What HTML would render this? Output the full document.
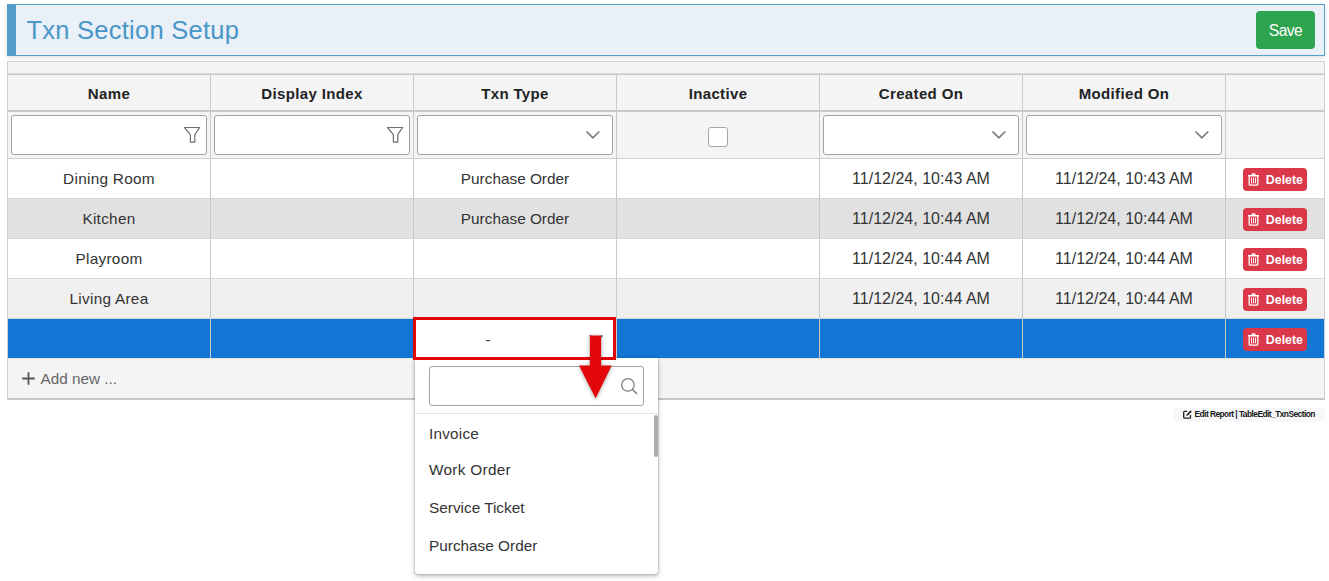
<!DOCTYPE html>
<html><head><meta charset="utf-8"><title>Txn Section Setup</title>
<style>
*{box-sizing:border-box;margin:0;padding:0}
html,body{width:1329px;height:581px;overflow:hidden;background:#fff}
body{font-family:"Liberation Sans",sans-serif;font-size:16px;color:#333;position:relative}
.abs{position:absolute}
#hdr{left:7px;top:4px;width:1318px;height:52px;background:#e9f0f8;border:1px solid #5a9fc9;border-left:9px solid #559bc8;box-shadow:0 2px 4px rgba(0,0,0,.12)}
#title{left:26.5px;top:15px;font-size:25.5px;line-height:30px;color:#4a96c7;white-space:nowrap;letter-spacing:.25px}
#save{left:1256px;top:11px;width:59px;height:38px;background:#2fa44f;border-radius:4px;color:#fff;text-align:center;line-height:40px;font-size:15.6px;letter-spacing:-.55px}
#grid{left:7px;top:61px;width:1318px;height:339px;background:#f4f4f4;border:1px solid #cfcfcf;border-bottom:2px solid #c6c6c6}
.hl{position:absolute;left:8px;width:1316px;height:1px;background:#d6d6d6}
.vl{position:absolute;background:#c9c9c9;width:1px}
.row{position:absolute;left:8px;width:1316px;height:40px}
.th{position:absolute;top:76px;height:35px;line-height:35px;text-align:center;font-weight:700;color:#222;font-size:15px;letter-spacing:.35px;white-space:nowrap}
.inp{position:absolute;top:115px;height:40px;width:196px;background:#fff;border:1px solid #a3a3a3;border-radius:3px}
.fi{position:absolute;left:171px;top:10px}
.ci{position:absolute;left:166px;top:12px}
.td{position:absolute;height:40px;line-height:40px;text-align:center;white-space:nowrap;color:#333;font-size:15.35px}
.dt{font-size:16px;letter-spacing:.02px}
.nm{letter-spacing:.28px}
.del{position:absolute;left:1243px;width:64px;height:23px;background:#da3848;border-radius:4px;color:#fff;font-weight:700;font-size:12.4px;line-height:25px;padding-left:22.8px;white-space:nowrap;overflow:hidden}
.del svg{position:absolute;left:4px;top:4px}
#cb{left:708px;top:127px;width:20px;height:20px;background:#fff;border:1px solid #a6a6a6;border-radius:3px}
#add{left:40.5px;top:359px;height:40px;line-height:40px;color:#666;font-size:15.3px;white-space:nowrap}
#badge{left:1173px;top:408px;width:152px;height:14px;background:#f7f8fa;border-radius:4px}
#badge span{position:absolute;left:21.5px;top:0;line-height:13px;font-size:8.4px;font-weight:700;color:#181818;letter-spacing:-.55px;white-space:nowrap}
#badge svg{position:absolute;left:9.5px;top:1.5px}
#red{left:413px;top:317px;width:203.4px;height:43px;border:3px solid #e30306;background:#fff}
#dash{left:483px;top:319px;width:10px;text-align:center;line-height:40px;font-size:16.5px;color:#555}
#pop{left:415px;top:358px;width:243px;height:216px;background:#fff;border-radius:0 0 3px 3px;box-shadow:0 0 1.5px rgba(0,0,0,.45),0 2px 5px rgba(0,0,0,.28)}
#srch{left:429px;top:366px;width:215px;height:40px;background:#fff;border:1px solid #a3a3a3;border-radius:3px}
#sep{left:415px;top:413px;width:243px;height:1px;background:#e4e4e4}
#thumb{left:654px;top:414.5px;width:4px;height:42.5px;background:#adadad;border-radius:2px}
.it{position:absolute;left:429px;font-size:15.35px;line-height:20px;color:#333;white-space:nowrap}
</style></head><body>
<div id="hdr" class="abs"></div>
<div id="title" class="abs">Txn Section Setup</div>
<div id="save" class="abs">Save</div>
<div id="grid" class="abs"></div>

<div class="hl" style="top:73px;background:#dcdcdc"></div>
<div class="hl" style="top:74px;background:#c4c4c4"></div>
<div class="hl" style="top:110px;height:2px;background:#c8c8c8"></div>
<div class="hl" style="top:158px;background:#cfcfcf"></div>
<div class="row" style="top:159px;background:#ffffff"></div>
<div class="row" style="top:199px;background:#e1e1e1"></div>
<div class="hl" style="top:198px"></div>
<div class="row" style="top:239px;background:#ffffff"></div>
<div class="hl" style="top:238px"></div>
<div class="row" style="top:279px;background:#f0f0f0"></div>
<div class="hl" style="top:278px"></div>
<div class="row" style="top:319px;background:#1277d4"></div>
<div class="hl" style="top:318px"></div>
<div class="hl" style="top:358px;background:#e6e6e6"></div>
<div class="vl" style="left:210px;top:75px;height:283px"></div>
<div class="vl" style="left:413px;top:75px;height:283px"></div>
<div class="vl" style="left:616px;top:75px;height:283px"></div>
<div class="vl" style="left:819px;top:75px;height:283px"></div>
<div class="vl" style="left:1022px;top:75px;height:283px"></div>
<div class="vl" style="left:1225px;top:75px;height:283px"></div>
<div class="th" style="left:8px;width:202px">Name</div>
<div class="th" style="left:211px;width:202px">Display Index</div>
<div class="th" style="left:414px;width:202px">Txn Type</div>
<div class="th" style="left:617px;width:202px">Inactive</div>
<div class="th" style="left:820px;width:202px">Created On</div>
<div class="th" style="left:1023px;width:202px">Modified On</div>
<div class="inp" style="left:11px"><svg class="fi" width="18" height="18" viewBox="0 0 18 18"><path d="M1.5 1.5H16.7L11.8 8.6V16.2H7.4V8.6Z" fill="none" stroke="#6e6e6e" stroke-width="1.2" stroke-linejoin="round"/></svg></div>
<div class="inp" style="left:214px"><svg class="fi" width="18" height="18" viewBox="0 0 18 18"><path d="M1.5 1.5H16.7L11.8 8.6V16.2H7.4V8.6Z" fill="none" stroke="#6e6e6e" stroke-width="1.2" stroke-linejoin="round"/></svg></div>
<div class="inp" style="left:417px"><svg class="ci" width="18" height="12" viewBox="0 0 18 12"><path d="M2.5 3.5L8.9 9.9L15.3 3.5" fill="none" stroke="#7a7a7a" stroke-width="1.7" stroke-linecap="butt" stroke-linejoin="miter"/></svg></div>
<div class="inp" style="left:823px"><svg class="ci" width="18" height="12" viewBox="0 0 18 12"><path d="M2.5 3.5L8.9 9.9L15.3 3.5" fill="none" stroke="#7a7a7a" stroke-width="1.7" stroke-linecap="butt" stroke-linejoin="miter"/></svg></div>
<div class="inp" style="left:1026px"><svg class="ci" width="18" height="12" viewBox="0 0 18 12"><path d="M2.5 3.5L8.9 9.9L15.3 3.5" fill="none" stroke="#7a7a7a" stroke-width="1.7" stroke-linecap="butt" stroke-linejoin="miter"/></svg></div>
<div id="cb" class="abs"></div>
<div class="td nm" style="left:8px;top:159px;width:202px">Dining Room</div>
<div class="td" style="left:414px;top:159px;width:202px">Purchase Order</div>
<div class="td dt" style="left:820px;top:159px;width:202px">11/12/24, 10:43 AM</div>
<div class="td dt" style="left:1023px;top:159px;width:202px">11/12/24, 10:43 AM</div>
<div class="del" style="top:168px"><svg width="13" height="15" viewBox="0 0 13 15"><path d="M1 3h11v1.5H1z" fill="#fff"/><path d="M4.2 3.3l.9-1.6a.7.7 0 0 1 .6-.4h1.6a.7.7 0 0 1 .6.4l.9 1.6z" fill="#fff" fill-opacity=".8" stroke="#fff" stroke-width=".5"/><path d="M2.2 4.3v7.7a1.2 1.2 0 0 0 1.2 1.2h6.2a1.2 1.2 0 0 0 1.2-1.2V4.3" fill="none" stroke="#fff" stroke-width="1.3"/><path d="M4.5 5.6v5.8M6.5 5.6v5.8M8.5 5.6v5.8" stroke="#fff" stroke-width="1"/></svg>Delete</div>
<div class="td nm" style="left:8px;top:199px;width:202px">Kitchen</div>
<div class="td" style="left:414px;top:199px;width:202px">Purchase Order</div>
<div class="td dt" style="left:820px;top:199px;width:202px">11/12/24, 10:44 AM</div>
<div class="td dt" style="left:1023px;top:199px;width:202px">11/12/24, 10:44 AM</div>
<div class="del" style="top:208px"><svg width="13" height="15" viewBox="0 0 13 15"><path d="M1 3h11v1.5H1z" fill="#fff"/><path d="M4.2 3.3l.9-1.6a.7.7 0 0 1 .6-.4h1.6a.7.7 0 0 1 .6.4l.9 1.6z" fill="#fff" fill-opacity=".8" stroke="#fff" stroke-width=".5"/><path d="M2.2 4.3v7.7a1.2 1.2 0 0 0 1.2 1.2h6.2a1.2 1.2 0 0 0 1.2-1.2V4.3" fill="none" stroke="#fff" stroke-width="1.3"/><path d="M4.5 5.6v5.8M6.5 5.6v5.8M8.5 5.6v5.8" stroke="#fff" stroke-width="1"/></svg>Delete</div>
<div class="td nm" style="left:8px;top:239px;width:202px">Playroom</div>
<div class="td dt" style="left:820px;top:239px;width:202px">11/12/24, 10:44 AM</div>
<div class="td dt" style="left:1023px;top:239px;width:202px">11/12/24, 10:44 AM</div>
<div class="del" style="top:248px"><svg width="13" height="15" viewBox="0 0 13 15"><path d="M1 3h11v1.5H1z" fill="#fff"/><path d="M4.2 3.3l.9-1.6a.7.7 0 0 1 .6-.4h1.6a.7.7 0 0 1 .6.4l.9 1.6z" fill="#fff" fill-opacity=".8" stroke="#fff" stroke-width=".5"/><path d="M2.2 4.3v7.7a1.2 1.2 0 0 0 1.2 1.2h6.2a1.2 1.2 0 0 0 1.2-1.2V4.3" fill="none" stroke="#fff" stroke-width="1.3"/><path d="M4.5 5.6v5.8M6.5 5.6v5.8M8.5 5.6v5.8" stroke="#fff" stroke-width="1"/></svg>Delete</div>
<div class="td nm" style="left:8px;top:279px;width:202px">Living Area</div>
<div class="td dt" style="left:820px;top:279px;width:202px">11/12/24, 10:44 AM</div>
<div class="td dt" style="left:1023px;top:279px;width:202px">11/12/24, 10:44 AM</div>
<div class="del" style="top:288px"><svg width="13" height="15" viewBox="0 0 13 15"><path d="M1 3h11v1.5H1z" fill="#fff"/><path d="M4.2 3.3l.9-1.6a.7.7 0 0 1 .6-.4h1.6a.7.7 0 0 1 .6.4l.9 1.6z" fill="#fff" fill-opacity=".8" stroke="#fff" stroke-width=".5"/><path d="M2.2 4.3v7.7a1.2 1.2 0 0 0 1.2 1.2h6.2a1.2 1.2 0 0 0 1.2-1.2V4.3" fill="none" stroke="#fff" stroke-width="1.3"/><path d="M4.5 5.6v5.8M6.5 5.6v5.8M8.5 5.6v5.8" stroke="#fff" stroke-width="1"/></svg>Delete</div>
<div class="del" style="top:328px"><svg width="13" height="15" viewBox="0 0 13 15"><path d="M1 3h11v1.5H1z" fill="#fff"/><path d="M4.2 3.3l.9-1.6a.7.7 0 0 1 .6-.4h1.6a.7.7 0 0 1 .6.4l.9 1.6z" fill="#fff" fill-opacity=".8" stroke="#fff" stroke-width=".5"/><path d="M2.2 4.3v7.7a1.2 1.2 0 0 0 1.2 1.2h6.2a1.2 1.2 0 0 0 1.2-1.2V4.3" fill="none" stroke="#fff" stroke-width="1.3"/><path d="M4.5 5.6v5.8M6.5 5.6v5.8M8.5 5.6v5.8" stroke="#fff" stroke-width="1"/></svg>Delete</div>
<svg class="abs" style="left:22px;top:372px" width="13" height="13" viewBox="0 0 13 13"><path d="M6.5 0.3v12.4M0.3 6.5h12.4" stroke="#555" stroke-width="1.8" fill="none"/></svg>
<div id="add" class="abs">Add new ...</div>
<div id="badge" class="abs"><svg width="9" height="9" viewBox="0 0 9 9"><path d="M4.2 1.4H1.6a.9.9 0 0 0-.9.9v5a.9.9 0 0 0 .9.9h5a.9.9 0 0 0 .9-.9V4.9" fill="none" stroke="#222" stroke-width="1.3"/><path d="M3.4 5.8l.3-1.5L7.2.8a.6.6 0 0 1 .9 0l.3.3a.6.6 0 0 1 0 .9L4.9 5.5z" fill="#222"/></svg><span>Edit Report | TableEdit_TxnSection</span></div>
<div id="pop" class="abs"></div>
<div id="srch" class="abs"><svg style="position:absolute;left:190px;top:11px" width="18" height="18" viewBox="0 0 18 18"><circle cx="7.9" cy="6.9" r="6.25" fill="none" stroke="#7a7a7a" stroke-width="1.2"/><path d="M12.4 11.4l4.2 4.2" stroke="#7a7a7a" stroke-width="1.4" stroke-linecap="round"/></svg></div>
<div id="sep" class="abs"></div>
<div id="thumb" class="abs"></div>
<div class="it" style="top:424px;letter-spacing:0.2px">Invoice</div>
<div class="it" style="top:460px;letter-spacing:0.3px">Work Order</div>
<div class="it" style="top:498px;letter-spacing:0px">Service Ticket</div>
<div class="it" style="top:536px;letter-spacing:0px">Purchase Order</div>
<div id="red" class="abs"></div>
<div id="dash" class="abs">-</div>
<svg class="abs" style="left:570px;top:325px" width="60" height="85" viewBox="0 0 60 85"><path d="M19.6 10.3L26 16.7L32.4 10.3" fill="none" stroke="#6a6a6a" stroke-width="1.7"/><path d="M19.9 10.4h11.2v30.1h10.6L25.6 73.5 9 40.5h10.9z" fill="#e3070b" filter="drop-shadow(0 1px 2px rgba(0,0,0,.35))"/></svg>
</body></html>
